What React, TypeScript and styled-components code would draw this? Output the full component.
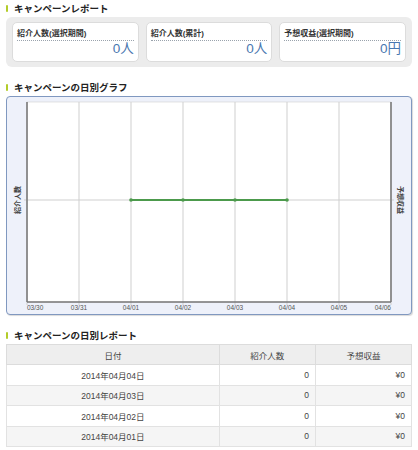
import React from 'react';
import styled, { createGlobalStyle } from 'styled-components';

const GlobalStyle = createGlobalStyle`
  body {
    margin: 0;
    background: #fff;
    font-family: "Liberation Sans", "Noto Sans CJK JP", sans-serif;
    color: #333;
  }
`;

const Page = styled.div`
  padding: 2px 6px 0 6px;
  width: 406px;
`;

const Section = styled.section`
  margin-bottom: 14px;
`;

const Title = styled.h2`
  position: relative;
  margin: 0 0 2px;
  padding-left: 8px;
  height: 13px;
  line-height: 13px;
  font-size: 9.5px;
  font-weight: bold;
  color: #222;

  &::before {
    content: '';
    position: absolute;
    left: 0;
    top: 3px;
    width: 2px;
    height: 7px;
    border-radius: 1px;
    background: #b3cc2a;
  }
`;

const SummaryBox = styled.div`
  display: grid;
  grid-template-columns: repeat(3, 1fr);
  gap: 7px;
  padding: 5px 6px;
  background: #ececec;
  border-radius: 6px;
`;

const Card = styled.div`
  height: 40px;
  padding: 5px 4px 0 4px;
  background: #fff;
  border: 1px solid #dcdcdc;
  border-radius: 5px;
  box-sizing: border-box;
`;

const CardLabel = styled.div`
  font-size: 8px;
  font-weight: bold;
  line-height: 11px;
  padding-bottom: 1px;
  border-bottom: 1px dotted #9aa3ad;
`;

const CardValue = styled.div`
  text-align: right;
  font-size: 13.5px;
  line-height: 16px;
  color: #4a78b0;
`;

const ChartBox = styled.div`
  height: 217px;
  background: #eef1fa;
  border: 1px solid #8098c0;
  border-radius: 4px;
  box-shadow: 1px 1px 1px rgba(0, 0, 0, 0.15);
  overflow: hidden;
`;

const Table = styled.table`
  width: 100%;
  border-collapse: collapse;
  font-size: 8.5px;
  color: #444;
`;

const Th = styled.th<{ $w: number }>`
  width: ${({ $w }) => $w}px;
  height: 19px;
  padding: 0;
  font-weight: normal;
  background: #eeeeee;
  border: 1px solid #dcdcdc;
  text-align: center;
`;

const Tr = styled.tr<{ $alt: boolean }>`
  background: ${({ $alt }) => ($alt ? '#f5f5f5' : '#fff')};
`;

const Td = styled.td<{ $align?: string }>`
  height: 19.5px;
  padding: 0 6px;
  border: 1px solid #e2e2e2;
  text-align: ${({ $align }) => $align || 'right'};
`;

const cards = [
  { label: '紹介人数(選択期間)', value: '0人' },
  { label: '紹介人数(累計)', value: '0人' },
  { label: '予想収益(選択期間)', value: '0円' },
];

const dates = ['03/30', '03/31', '04/01', '04/02', '04/03', '04/04', '04/05', '04/06'];
const rows = ['2014年04月04日', '2014年04月03日', '2014年04月02日', '2014年04月01日'];

const Chart = () => {
  const left = 20;
  const top = 5;
  const bottom = 205;
  const step = 52;
  const right = left + step * 7;
  const mid = 103;
  const points = [2, 3, 4, 5].map((i) => left + step * i);
  return (
    <svg width="405" height="217" viewBox="0 0 405 217" style={{ display: 'block' }}>
      <rect x={left} y={top} width={right - left} height={bottom - top} fill="#fff" stroke="#d0d0d0" strokeWidth="0.6" />
      {dates.map((d, i) => {
        const x = left + step * i;
        const anchor = i === 0 ? 'start' : i === dates.length - 1 ? 'end' : 'middle';
        return (
          <g key={d}>
            <line x1={x} y1={top} x2={x} y2={bottom + 3} stroke="#cfcfcf" strokeWidth="1" />
            <text x={x} y={bottom + 8} fontSize="6.5" fill="#555" textAnchor={anchor}>
              {d}
            </text>
          </g>
        );
      })}
      <line x1={left - 3} y1={mid} x2={right + 3} y2={mid} stroke="#cfcfcf" strokeWidth="1" />
      <line x1={left} y1={top} x2={left} y2={bottom} stroke="#777" strokeWidth="1.5" />
      <line x1={right} y1={top} x2={right} y2={bottom} stroke="#777" strokeWidth="1.5" />
      <line x1={left} y1={bottom} x2={right} y2={bottom} stroke="#777" strokeWidth="1.5" />
      <polyline points={points.map((x) => `${x},${mid}`).join(' ')} fill="none" stroke="#4c9a4c" strokeWidth="2" />
      {points.map((x) => (
        <circle key={x} cx={x} cy={mid} r="1.8" fill="#4c9a4c" />
      ))}
      <text x="11" y={mid} fontSize="7" fontWeight="bold" fill="#444" textAnchor="middle" transform={`rotate(-90 11 ${mid})`} dominantBaseline="middle">
        紹介人数
      </text>
      <text x="393" y={mid} fontSize="7" fontWeight="bold" fill="#444" textAnchor="middle" transform={`rotate(90 393 ${mid})`} dominantBaseline="middle">
        予想収益
      </text>
    </svg>
  );
};

export default function App() {
  return (
    <>
      <GlobalStyle />
      <Page>
        <Section>
          <Title>キャンペーンレポート</Title>
          <SummaryBox>
            {cards.map((c) => (
              <Card key={c.label}>
                <CardLabel>{c.label}</CardLabel>
                <CardValue>{c.value}</CardValue>
              </Card>
            ))}
          </SummaryBox>
        </Section>
        <Section>
          <Title>キャンペーンの日別グラフ</Title>
          <ChartBox>
            <Chart />
          </ChartBox>
        </Section>
        <Section>
          <Title>キャンペーンの日別レポート</Title>
          <Table>
            <thead>
              <tr>
                <Th $w={214}>日付</Th>
                <Th $w={96}>紹介人数</Th>
                <Th $w={96}>予想収益</Th>
              </tr>
            </thead>
            <tbody>
              {rows.map((r, i) => (
                <Tr key={r} $alt={i % 2 === 1}>
                  <Td $align="center">{r}</Td>
                  <Td>0</Td>
                  <Td>¥0</Td>
                </Tr>
              ))}
            </tbody>
          </Table>
        </Section>
      </Page>
    </>
  );
}
